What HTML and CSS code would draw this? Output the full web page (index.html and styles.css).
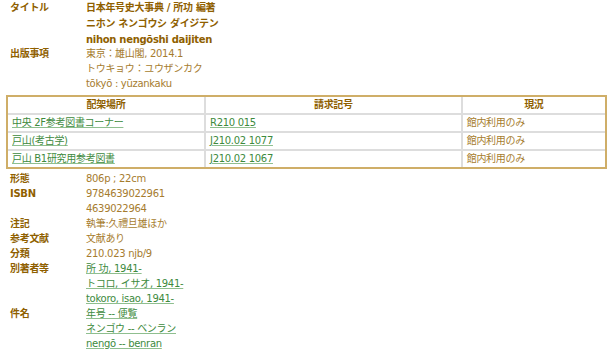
FILE: index.html
```html
<!DOCTYPE html>
<html lang="ja">
<head>
  <meta charset="UTF-8" />
  <meta name="viewport" content="width=device-width, initial-scale=1.0"/>
  <title>日本年号史大事典</title>
  <link rel="stylesheet" href="styles.css">
</head>
<body>

  <div class="bib">
    <div class="row">
      <div class="label">タイトル</div>
      <div class="value title">
        <div>日本年号史大事典 / 所功 編著</div>
        <div>ニホン ネンゴウシ ダイジテン</div>
        <div>nihon nengōshi daijiten</div>
      </div>
    </div>
    <div class="row pub">
      <div class="label">出版事項</div>
      <div class="value">
        <div>東京：雄山閣, 2014.1</div>
        <div>トウキョウ：ユウザンカク</div>
        <div>tōkyō : yūzankaku</div>
      </div>
    </div>
  </div>

  <div class="holdings">
    <table>
      <thead>
        <tr>
          <th class="col-place">配架場所</th>
          <th class="col-call">請求記号</th>
          <th>現況</th>
        </tr>
      </thead>
      <tbody>
        <tr>
          <td><a href="#">中央 2F参考図書コーナー</a></td>
          <td><a href="#">R210 015</a></td>
          <td>館内利用のみ</td>
        </tr>
        <tr>
          <td><a href="#">戸山(考古学)</a></td>
          <td><a href="#">J210.02 1077</a></td>
          <td>館内利用のみ</td>
        </tr>
        <tr>
          <td><a href="#">戸山 B1研究用参考図書</a></td>
          <td><a href="#">J210.02 1067</a></td>
          <td>館内利用のみ</td>
        </tr>
      </tbody>
    </table>
  </div>

  <div class="bib lower">
    <div class="row">
      <div class="label">形態</div>
      <div class="value"><div>806p ; 22cm</div></div>
    </div>
    <div class="row">
      <div class="label">ISBN</div>
      <div class="value">
        <div>9784639022961</div>
        <div>4639022964</div>
      </div>
    </div>
    <div class="row">
      <div class="label">注記</div>
      <div class="value"><div>執筆:久禮旦雄ほか</div></div>
    </div>
    <div class="row">
      <div class="label">参考文献</div>
      <div class="value"><div>文献あり</div></div>
    </div>
    <div class="row">
      <div class="label">分類</div>
      <div class="value"><div>210.023 njb/9</div></div>
    </div>
    <div class="row">
      <div class="label">別著者等</div>
      <div class="value">
        <div><a href="#">所 功, 1941-</a></div>
        <div><a href="#">トコロ, イサオ, 1941-</a></div>
        <div><a href="#">tokoro, isao, 1941-</a></div>
      </div>
    </div>
    <div class="row">
      <div class="label">件名</div>
      <div class="value">
        <div><a href="#">年号 -- 便覧</a></div>
        <div><a href="#">ネンゴウ -- ベンラン</a></div>
        <div><a href="#">nengō -- benran</a></div>
      </div>
    </div>
  </div>

</body>
</html>
```

FILE: styles.css
```css
body {
  margin: 0;
  padding: 0 3px 0 6px;
  font-family: "DejaVu Sans", "Noto Sans CJK JP", sans-serif;
  font-size: 10px;
  letter-spacing: -0.3px;
  color: #a67c2e;
  background: #ffffff;
}
a {
  color: #3d8a3d;
  text-decoration: underline;
  text-decoration-color: #8fbf8f;
}
.bib .row {
  display: flex;
}
.bib .label {
  width: 76px;
  padding-left: 4px;
  flex-shrink: 0;
  font-weight: bold;
  color: #8f5f00;
  line-height: 15px;
}
.bib .value div {
  line-height: 15px;
}
.bib .title {
  font-weight: bold;
  color: #8f5f00;
}
.bib .title div {
  line-height: 16px;
}
.bib .pub {
  margin-top: -2px;
}
.lower {
  margin-top: 2px;
}
.holdings {
  margin-top: 4px;
  border: 2px solid #cfae68;
}
table {
  width: 100%;
  border-collapse: collapse;
}
th, td {
  height: 16px;
  padding: 0 4px;
  line-height: 16px;
  text-align: left;
}
th {
  text-align: center;
  font-weight: bold;
  color: #8f5f00;
}
th + th, td + td {
  border-left: 2px solid #dddddd;
}
tbody td {
  border-top: 2px solid #dddddd;
}
.col-place {
  width: 33%;
}
.col-call {
  width: 43%;
}
```
